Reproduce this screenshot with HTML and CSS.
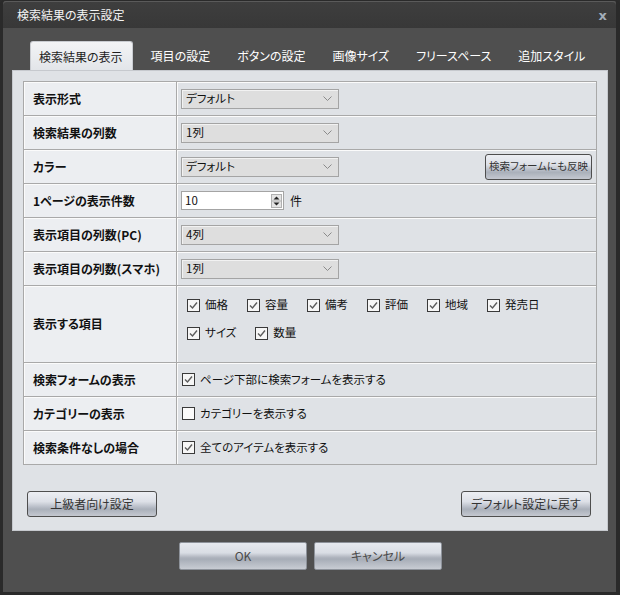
FILE: index.html
```html
<!DOCTYPE html>
<html lang="ja">
<head>
<meta charset="utf-8">
<title>検索結果の表示設定</title>
<link rel="stylesheet" href="styles.css">
</head>
<body>
<div class="window">
  <div class="titlebar">
    <span class="title">検索結果の表示設定</span>
    <span class="close">x</span>
  </div>
  <div class="body">
    <div class="tabs">
      <div class="tab active">検索結果の表示</div>
      <div class="tab">項目の設定</div>
      <div class="tab">ボタンの設定</div>
      <div class="tab">画像サイズ</div>
      <div class="tab">フリースペース</div>
      <div class="tab">追加スタイル</div>
    </div>
    <div class="panel">
      <table class="grid">
        <tr>
          <th>表示形式</th>
          <td><div class="select"><span>デフォルト</span><svg class="chev" width="9" height="5" viewBox="0 0 9 5"><path d="M0.5 0.5 L4.5 4.5 L8.5 0.5" fill="none" stroke="#8a8a8a"/></svg></div></td>
        </tr>
        <tr>
          <th>検索結果の列数</th>
          <td><div class="select"><span>1列</span><svg class="chev" width="9" height="5" viewBox="0 0 9 5"><path d="M0.5 0.5 L4.5 4.5 L8.5 0.5" fill="none" stroke="#8a8a8a"/></svg></div></td>
        </tr>
        <tr>
          <th>カラー</th>
          <td>
            <div class="split">
              <div class="select"><span>デフォルト</span><svg class="chev" width="9" height="5" viewBox="0 0 9 5"><path d="M0.5 0.5 L4.5 4.5 L8.5 0.5" fill="none" stroke="#8a8a8a"/></svg></div>
              <div class="btn small">検索フォームにも反映</div>
            </div>
          </td>
        </tr>
        <tr>
          <th>1ページの表示件数</th>
          <td>
            <div class="numrow">
              <div class="num">
                <span>10</span>
                <div class="spin">
                  <svg width="11" height="14" viewBox="0 0 11 14"><rect x="0.5" y="0.5" width="10" height="13" fill="#e4e4e4" stroke="#b0b0b0"/><line x1="1" y1="7" x2="10" y2="7" stroke="#b0b0b0"/><path d="M2.5 5.5 L5.5 2.5 L8.5 5.5 Z" fill="#222"/><path d="M2.5 8.5 L8.5 8.5 L5.5 11.5 Z" fill="#222"/></svg>
                </div>
              </div>
              <span class="unit">件</span>
            </div>
          </td>
        </tr>
        <tr>
          <th>表示項目の列数(PC)</th>
          <td><div class="select"><span>4列</span><svg class="chev" width="9" height="5" viewBox="0 0 9 5"><path d="M0.5 0.5 L4.5 4.5 L8.5 0.5" fill="none" stroke="#8a8a8a"/></svg></div></td>
        </tr>
        <tr>
          <th>表示項目の列数(スマホ)</th>
          <td><div class="select"><span>1列</span><svg class="chev" width="9" height="5" viewBox="0 0 9 5"><path d="M0.5 0.5 L4.5 4.5 L8.5 0.5" fill="none" stroke="#8a8a8a"/></svg></div></td>
        </tr>
        <tr class="tall">
          <th>表示する項目</th>
          <td class="items">
            <div class="itemrow">
              <label class="cb"><svg width="13" height="13" viewBox="0 0 13 13"><rect x="0.5" y="0.5" width="12" height="12" fill="#f6f6f6" stroke="#3a3a3a"/><path d="M3 6.5 L5.5 9 L10 3.5" fill="none" stroke="#5c5c5c" stroke-width="1.4"/></svg>価格</label>
              <label class="cb"><svg width="13" height="13" viewBox="0 0 13 13"><rect x="0.5" y="0.5" width="12" height="12" fill="#f6f6f6" stroke="#3a3a3a"/><path d="M3 6.5 L5.5 9 L10 3.5" fill="none" stroke="#5c5c5c" stroke-width="1.4"/></svg>容量</label>
              <label class="cb"><svg width="13" height="13" viewBox="0 0 13 13"><rect x="0.5" y="0.5" width="12" height="12" fill="#f6f6f6" stroke="#3a3a3a"/><path d="M3 6.5 L5.5 9 L10 3.5" fill="none" stroke="#5c5c5c" stroke-width="1.4"/></svg>備考</label>
              <label class="cb"><svg width="13" height="13" viewBox="0 0 13 13"><rect x="0.5" y="0.5" width="12" height="12" fill="#f6f6f6" stroke="#3a3a3a"/><path d="M3 6.5 L5.5 9 L10 3.5" fill="none" stroke="#5c5c5c" stroke-width="1.4"/></svg>評価</label>
              <label class="cb"><svg width="13" height="13" viewBox="0 0 13 13"><rect x="0.5" y="0.5" width="12" height="12" fill="#f6f6f6" stroke="#3a3a3a"/><path d="M3 6.5 L5.5 9 L10 3.5" fill="none" stroke="#5c5c5c" stroke-width="1.4"/></svg>地域</label>
              <label class="cb"><svg width="13" height="13" viewBox="0 0 13 13"><rect x="0.5" y="0.5" width="12" height="12" fill="#f6f6f6" stroke="#3a3a3a"/><path d="M3 6.5 L5.5 9 L10 3.5" fill="none" stroke="#5c5c5c" stroke-width="1.4"/></svg>発売日</label>
            </div>
            <div class="itemrow">
              <label class="cb"><svg width="13" height="13" viewBox="0 0 13 13"><rect x="0.5" y="0.5" width="12" height="12" fill="#f6f6f6" stroke="#3a3a3a"/><path d="M3 6.5 L5.5 9 L10 3.5" fill="none" stroke="#5c5c5c" stroke-width="1.4"/></svg>サイズ</label>
              <label class="cb"><svg width="13" height="13" viewBox="0 0 13 13"><rect x="0.5" y="0.5" width="12" height="12" fill="#f6f6f6" stroke="#3a3a3a"/><path d="M3 6.5 L5.5 9 L10 3.5" fill="none" stroke="#5c5c5c" stroke-width="1.4"/></svg>数量</label>
            </div>
          </td>
        </tr>
        <tr>
          <th>検索フォームの表示</th>
          <td class="single"><label class="cb"><svg width="13" height="13" viewBox="0 0 13 13"><rect x="0.5" y="0.5" width="12" height="12" fill="#f6f6f6" stroke="#3a3a3a"/><path d="M3 6.5 L5.5 9 L10 3.5" fill="none" stroke="#5c5c5c" stroke-width="1.4"/></svg>ページ下部に検索フォームを表示する</label></td>
        </tr>
        <tr>
          <th>カテゴリーの表示</th>
          <td class="single"><label class="cb"><svg width="13" height="13" viewBox="0 0 13 13"><rect x="0.5" y="0.5" width="12" height="12" fill="#fbfbfb" stroke="#3a3a3a"/></svg>カテゴリーを表示する</label></td>
        </tr>
        <tr>
          <th>検索条件なしの場合</th>
          <td class="single"><label class="cb"><svg width="13" height="13" viewBox="0 0 13 13"><rect x="0.5" y="0.5" width="12" height="12" fill="#f6f6f6" stroke="#3a3a3a"/><path d="M3 6.5 L5.5 9 L10 3.5" fill="none" stroke="#5c5c5c" stroke-width="1.4"/></svg>全てのアイテムを表示する</label></td>
        </tr>
      </table>
      <div class="panel-actions">
        <div class="btn mid">上級者向け設定</div>
        <div class="btn mid">デフォルト設定に戻す</div>
      </div>
    </div>
    <div class="footer">
      <div class="btn big">OK</div>
      <div class="btn big">キャンセル</div>
    </div>
  </div>
</div>
</body>
</html>
```

FILE: styles.css
```css
* { box-sizing: border-box; }
html, body { margin: 0; padding: 0; background: #2c2c2c; }
body {
  font-family: "Noto Sans CJK JP", "Noto Sans", sans-serif;
  font-size: 12px;
  font-feature-settings: "palt";
  line-height: 1;
}
.window {
  width: 620px;
  height: 595px;
  border: 1px solid #2a2a2a;
  border-left-width: 3px;
  border-right-width: 4px;
  border-bottom-width: 3px;
  border-radius: 5px 5px 0 0;
  background: #4f4f4f;
  display: flex;
  flex-direction: column;
}
.titlebar {
  height: 27px;
  flex: none;
  background: linear-gradient(#3e3e3e, #383838);
  border-top: 1px solid #5a5a5a;
  border-radius: 4px 4px 0 0;
  display: flex;
  align-items: center;
  justify-content: space-between;
  padding: 0 9px 0 14px;
}
.title { color: #f4f4f4; font-size: 12px; }
.close {
  color: #a3adb8;
  font-family: "DejaVu Sans", sans-serif;
  font-weight: bold;
  font-size: 13px;
}
.body {
  flex: 1;
  display: flex;
  flex-direction: column;
  padding: 13px 8px 0 9px;
  background: #4f4f4f;
}
.tabs {
  display: flex;
  height: 29px;
  padding-left: 18px;
  gap: 9px;
}
.tab {
  flex: none;
  white-space: nowrap;
  color: #ffffff;
  padding: 0 9px;
  display: flex;
  align-items: center;
  height: 29px;
  font-size: 12px;
}
.tab.active {
  color: #1e1e1e;
  background: linear-gradient(#f3f4f6, #e2e5e9);
  border: 1px solid #c9ccd1;
  border-bottom: none;
  border-radius: 3px 3px 0 0;
  padding: 1px 9px 0 8px;
}
.panel {
  background: #dfe2e6;
  border: 1px solid #c6c9ce;
  width: 596px;
  height: 461px;
  padding: 10px 11px 0 10px;
}
.grid {
  border-collapse: collapse;
  width: 574px;
  table-layout: fixed;
}
.grid th, .grid td {
  border: 1px solid #a9a9a9;
  height: 34px;
  padding: 0;
  box-shadow: inset 1px 1px 0 #fbfbfb;
}
.grid th {
  width: 153px;
  background: #eceef1;
  text-align: left;
  font-weight: bold;
  color: #111;
  padding-left: 9px;
  font-size: 12px;
}
.grid td {
  background: #dfe2e6;
  padding-left: 4px;
  padding-right: 4px;
  font-size: 11.5px;
}
.grid tr.tall th, .grid tr.tall td { height: 77px; }
.grid td.items { vertical-align: top; padding-top: 11px; padding-left: 10px; }
.grid td.single { padding-left: 5px; }
.select {
  width: 158px;
  height: 20px;
  border: 1px solid #a4a4a4;
  background: #dedede;
  box-shadow: inset 1px 1px 0 #f2f2f2;
  display: flex;
  align-items: center;
  justify-content: space-between;
  padding: 0 6px 0 4px;
  color: #111;
}
.split {
  display: flex;
  align-items: center;
  justify-content: space-between;
}
.numrow { display: flex; align-items: center; gap: 6px; }
.num {
  width: 103px;
  height: 19px;
  border: 1px solid #a4a4a4;
  background: #fff;
  display: flex;
  align-items: center;
  justify-content: space-between;
  padding: 0 1px 0 3px;
  color: #111;
}
.spin { display: flex; }
.unit { color: #111; font-size: 12px; }
.itemrow { display: flex; column-gap: 19px; height: 16px; align-items: center; }
.itemrow + .itemrow { margin-top: 12px; }
.cb {
  display: flex;
  align-items: center;
  gap: 5px;
  color: #111;
  white-space: nowrap;
}
.cb svg { flex: none; }
.btn {
  display: flex;
  align-items: center;
  justify-content: center;
  color: #333;
  border: 1px solid #4e4e4e;
  border-radius: 3px;
  white-space: nowrap;
  background: linear-gradient(#eceef3 0%, #dde0e7 40%, #b9bec8 62%, #aab0ba 72%, #c4c8d0 100%);
}
.btn.small { width: 107px; height: 26px; font-size: 10.5px; }
.btn.mid { width: 130px; height: 26px; font-size: 12px; }
.btn.big {
  width: 128px;
  height: 28px;
  border-color: #8d929a;
  border-radius: 2px;
  color: #4a4a4a;
  background: linear-gradient(#e6e9ef 0%, #d9dde4 38%, #b0b5bf 55%, #a7adb7 62%, #c8ccd3 100%);
}
.panel-actions {
  display: flex;
  justify-content: space-between;
  padding: 0 5px 0 4px;
  margin-top: 26px;
}
.footer {
  display: flex;
  justify-content: center;
  gap: 7px;
  padding-top: 11px;
  padding-left: 1px;
}
```
